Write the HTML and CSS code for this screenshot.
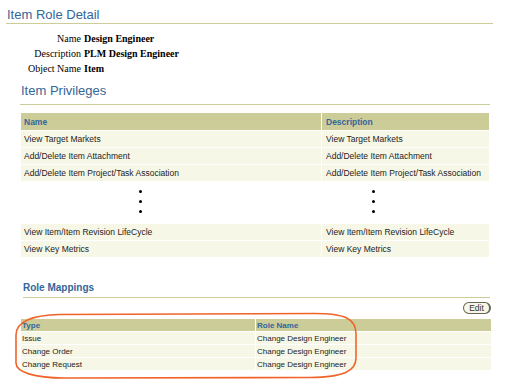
FILE: index.html
```html
<!DOCTYPE html>
<html lang="en">
<head>
  <meta charset="UTF-8">
  <title>Item Role Detail</title>
  <link rel="stylesheet" href="styles.css">
</head>
<body>
  <div class="page">
    <h1 class="page-title">Item Role Detail</h1>

    <div class="details">
      <span class="label">Name</span><span class="value">Design Engineer</span>
      <span class="label">Description</span><span class="value">PLM Design Engineer</span>
      <span class="label">Object Name</span><span class="value">Item</span>
    </div>

    <section class="privileges">
      <h2 class="section-title">Item Privileges</h2>
      <table class="grid priv-table">
        <colgroup><col class="col-name"><col class="col-desc"></colgroup>
        <tr><th>Name</th><th>Description</th></tr>
        <tr><td>View Target Markets</td><td>View Target Markets</td></tr>
        <tr><td>Add/Delete Item Attachment</td><td>Add/Delete Item Attachment</td></tr>
        <tr><td>Add/Delete Item Project/Task Association</td><td>Add/Delete Item Project/Task Association</td></tr>
        <tr class="more">
          <td class="dots dots-left"><span></span><span></span><span></span></td>
          <td class="dots dots-right"><span></span><span></span><span></span></td>
        </tr>
        <tr><td>View Item/Item Revision LifeCycle</td><td>View Item/Item Revision LifeCycle</td></tr>
        <tr><td>View Key Metrics</td><td>View Key Metrics</td></tr>
      </table>
    </section>

    <section class="mappings">
      <h3 class="sub-title">Role Mappings</h3>
      <div class="actions"><button type="button" class="btn">Edit</button></div>
      <div class="mapping-wrap">
        <table class="grid map-table">
          <colgroup><col class="col-type"><col class="col-role"></colgroup>
          <tr><th>Type</th><th>Role Name</th></tr>
          <tr><td>Issue</td><td>Change Design Engineer</td></tr>
          <tr><td>Change Order</td><td>Change Design Engineer</td></tr>
          <tr><td>Change Request</td><td>Change Design Engineer</td></tr>
        </table>
        <!-- hand drawn highlight around the mapped roles -->
        <svg class="highlight" width="346" height="69" viewBox="0 0 346 69">
          <path d="M2 51 L2 23 C2 10 18 3 46 2.5 L300 1.5 C330 1.5 342 6 342 22 L342 46 C342 59 330 65 296 65.5 L50 66 C20 66 2 60 2 51 Z"
                fill="none" stroke="#f0642a" stroke-width="1.6"/>
        </svg>
      </div>
    </section>
  </div>
</body>
</html>
```

FILE: styles.css
```css
/* base */
body {
  margin: 0;
  background: #fff;
  color: #000;
  font-family: "Liberation Sans", Arial, sans-serif;
}

.page {
  padding: 7px 22px 0 6px;
}

.page-title,
.section-title {
  margin: 0;
  font-size: 13px;
  font-weight: normal;
  line-height: 15px;
  color: #336699;
  border-bottom: 1px solid #cccc99;
}

.page-title {
  padding: 0 0 1px 1px;
}

/* name / description block */
.details {
  display: grid;
  grid-template-columns: 75px auto;
  justify-content: start;
  column-gap: 3px;
  margin-top: 7px;
  font-family: "Liberation Serif", "Times New Roman", serif;
  font-size: 10px;
  line-height: 15px;
}

.details .label {
  text-align: right;
}

.details .value {
  font-weight: bold;
}

/* privileges */
.privileges {
  margin: 0 3px 0 14px;
}

.section-title {
  margin-top: 7px;
  padding: 0 0 6px 1px;
}

.grid {
  border-collapse: separate;
  border-spacing: 1px;
  table-layout: fixed;
  font-size: 8.5px;
}

.grid th,
.grid td {
  padding: 0 3px;
  text-align: left;
  vertical-align: middle;
  white-space: nowrap;
  overflow: hidden;
}

.grid th {
  background: #cccc99;
  color: #336699;
  font-weight: bold;
}

.grid td {
  background: #f7f7e7;
  color: #222;
}

.priv-table {
  width: 470px;
  margin-top: 7px;
}

.priv-table .col-name { width: 300px; }
.priv-table .col-desc { width: 167px; }

.priv-table th { height: 17px; }
.priv-table td { height: 16px; }

.priv-table th + th,
.priv-table td + td {
  padding-left: 4px;
}

/* the "more rows" marker */
.priv-table .more td {
  height: 41px;
  background: #fff;
  vertical-align: top;
}

.dots span {
  display: block;
  width: 3px;
  height: 3px;
  margin-bottom: 7px;
  border-radius: 50%;
  background: #000;
}

.dots span:first-child {
  margin-top: 8px;
}

.priv-table .dots-left { padding-left: 118px; }
.priv-table td.dots-right { padding-left: 50px; }

/* role mappings */
.mappings {
  margin: 24px 1px 0 14px;
}

.sub-title {
  margin: 0 2px 0 3px;
  padding-bottom: 3px;
  font-size: 10px;
  line-height: 12px;
  color: #336699;
  border-bottom: 1px solid #cccc99;
}

.actions {
  display: flex;
  justify-content: flex-end;
  margin-top: 4px;
  padding-right: 1px;
}

.btn {
  width: 28px;
  height: 12px;
  padding: 0;
  font-family: "Liberation Sans", Arial, sans-serif;
  font-size: 8.5px;
  line-height: 10px;
  color: #333;
  background: #f7f7e7;
  border: 1px solid #666655;
  border-right-width: 2px;
  border-radius: 6px;
  cursor: pointer;
}

.mapping-wrap {
  position: relative;
  margin-top: 4px;
  padding-bottom: 10px;
}

.map-table {
  width: 472px;
  font-size: 8px;
}

.map-table .col-type { width: 234px; }
.map-table .col-role { width: 235px; }

.map-table th,
.map-table td {
  height: 12px;
  padding: 0 1px;
}

.highlight {
  position: absolute;
  left: -6px;
  top: -6px;
  pointer-events: none;
}
```
